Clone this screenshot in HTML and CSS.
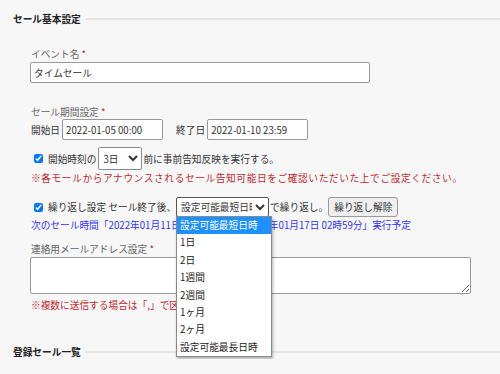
FILE: index.html
```html
<!DOCTYPE html>
<html lang="ja">

<head>
    <meta charset="UTF-8">
    <meta name="viewport" content="width=device-width, initial-scale=1.0">
    <title>セール基本設定</title>
    <link rel="stylesheet" href="styles.css">
</head>

<body>
    <div class="page">
        <div class="section-head">
            <h2>セール基本設定</h2>
            <span class="rule"></span>
        </div>

        <div class="form">
            <div class="field field-name">
                <div class="label">イベント名 <span class="req">*</span></div>
                <input class="text name-input" type="text" value="タイムセール">
            </div>

            <div class="field field-period">
                <div class="label">セール期間設定 <span class="req">*</span></div>
                <div class="row">
                    <span>開始日</span>
                    <input class="text date-input" type="text" value="2022-01-05 00:00">
                    <span class="end-label">終了日</span>
                    <input class="text date-input" type="text" value="2022-01-10 23:59">
                </div>
            </div>

            <div class="check-row notice-row">
                <input type="checkbox" checked>
                <span>開始時刻の</span>
                <select class="days-select">
                    <option>3日</option>
                </select>
                <span>前に事前告知反映を実行する。</span>
            </div>
            <p class="note red wide-note">※各モールからアナウンスされるセール告知可能日をご確認いただいた上でご設定ください。</p>

            <div class="check-row repeat-row">
                <input type="checkbox" checked>
                <span>繰り返し設定 セール終了後、</span>
                <span class="select-wrap">
                    <select class="repeat-select">
                        <option>設定可能最短日時</option>
                    </select>
                    <ul class="dropdown">
                        <li class="active">設定可能最短日時</li>
                        <li>1日</li>
                        <li>2日</li>
                        <li>1週間</li>
                        <li>2週間</li>
                        <li>1ヶ月</li>
                        <li>2ヶ月</li>
                        <li>設定可能最長日時</li>
                    </ul>
                </span>
                <span>で繰り返し。</span>
                <button class="btn">繰り返し解除</button>
            </div>
            <p class="note blue">次のセール時間「2022年01月11日 03時00分 から 2022年01月17日 02時59分」実行予定</p>

            <div class="field field-mail">
                <div class="label">連絡用メールアドレス設定 <span class="req">*</span></div>
                <textarea class="mail-input"></textarea>
            </div>
            <p class="note red mail-note">※複数に送信する場合は「,」で区切ってください。</p>
        </div>

        <div class="section-head list-head">
            <h2>登録セール一覧</h2>
            <span class="rule"></span>
        </div>
    </div>
</body>

</html>
```

FILE: styles.css
```css
body {
    margin: 0;
    background-color: #f7f7f7;
    font-family: "Noto Sans CJK JP", "Noto Sans", sans-serif;
    font-size: 9.7px;
    color: #333;
}

.page {
    padding-top: 12px;
}

.section-head {
    display: flex;
    align-items: center;
    gap: 4px;
    padding-left: 13px;
    height: 14px;
}

.section-head h2 {
    margin: 0;
    font-size: 9.7px;
    font-weight: bold;
    color: #222;
}

.section-head .rule {
    flex: 1;
    height: 2px;
    background-color: #e4e4e4;
}

.list-head {
    margin-top: 33px;
}

.form {
    padding-left: 30px;
}

.label {
    height: 14px;
    line-height: 14px;
    color: #666;
    padding-left: 1px;
}

.req {
    color: #c0282d;
}

.field-name {
    margin-top: 21px;
}

.field-name .label {
    margin-bottom: 1px;
}

.field-period {
    margin-top: 22px;
}

.text {
    box-sizing: border-box;
    height: 21px;
    margin: 0;
    padding: 0 3px;
    border: 1px solid #999;
    border-radius: 2px;
    background-color: #fff;
    font-family: inherit;
    font-size: 9.7px;
    color: #333;
}

.name-input {
    width: 340px;
}

.row {
    display: flex;
    align-items: center;
    height: 21px;
    padding-left: 1px;
}

.date-input {
    width: 101px;
    margin-left: 2px;
}

.end-label {
    margin-left: 13px;
}

.check-row {
    display: flex;
    align-items: center;
}

.check-row input[type="checkbox"] {
    width: 9px;
    height: 9px;
    margin: 0 5px 0 4px;
}

.notice-row {
    margin-top: 7px;
    height: 23px;
}

.repeat-row {
    margin-top: 12px;
    height: 20px;
}

select {
    box-sizing: border-box;
    margin: 0;
    border: 1px solid #888;
    border-radius: 2px;
    background-color: #fff;
    font-family: inherit;
    font-size: 9.7px;
    color: #333;
}

.days-select {
    width: 44px;
    height: 23px;
    margin: 0 1px 0 2px;
}

.select-wrap {
    position: relative;
    margin: 0 1px 0 0;
}

.repeat-select {
    display: block;
    width: 93px;
    height: 20px;
    border-color: #555;
}

.dropdown {
    position: absolute;
    top: 19px;
    left: 0;
    width: 94px;
    margin: 0;
    padding: 0;
    list-style: none;
    background-color: #fff;
    border: 1px solid #8a8a8a;
    box-shadow: 1px 2px 3px rgba(0, 0, 0, 0.3);
    z-index: 2;
}

.dropdown li {
    height: 17.4px;
    line-height: 17.4px;
    padding-left: 3px;
    color: #222;
}

.dropdown li.active {
    background-color: #1e90ff;
    color: #fff;
}

.btn {
    height: 20px;
    margin-left: 0;
    padding: 0 5px;
    border: 1px solid #999;
    border-radius: 3px;
    background-color: #efefef;
    font-family: inherit;
    font-size: 9.7px;
    color: #333;
}

.note {
    margin: 1px 0 0 1px;
    height: 14px;
    line-height: 14px;
    white-space: nowrap;
}

.wide-note {
    letter-spacing: 0.6px;
}

.red {
    color: #c0282d;
}

.blue {
    color: #3333ff;
}

.field-mail {
    margin-top: 10px;
}

.mail-input {
    display: block;
    box-sizing: border-box;
    width: 441px;
    height: 37px;
    margin: 1px 0 0;
    border: 1px solid #999;
    border-radius: 2px;
    background-color: #fff;
}

.mail-note {
    margin-top: 4px;
}
```
